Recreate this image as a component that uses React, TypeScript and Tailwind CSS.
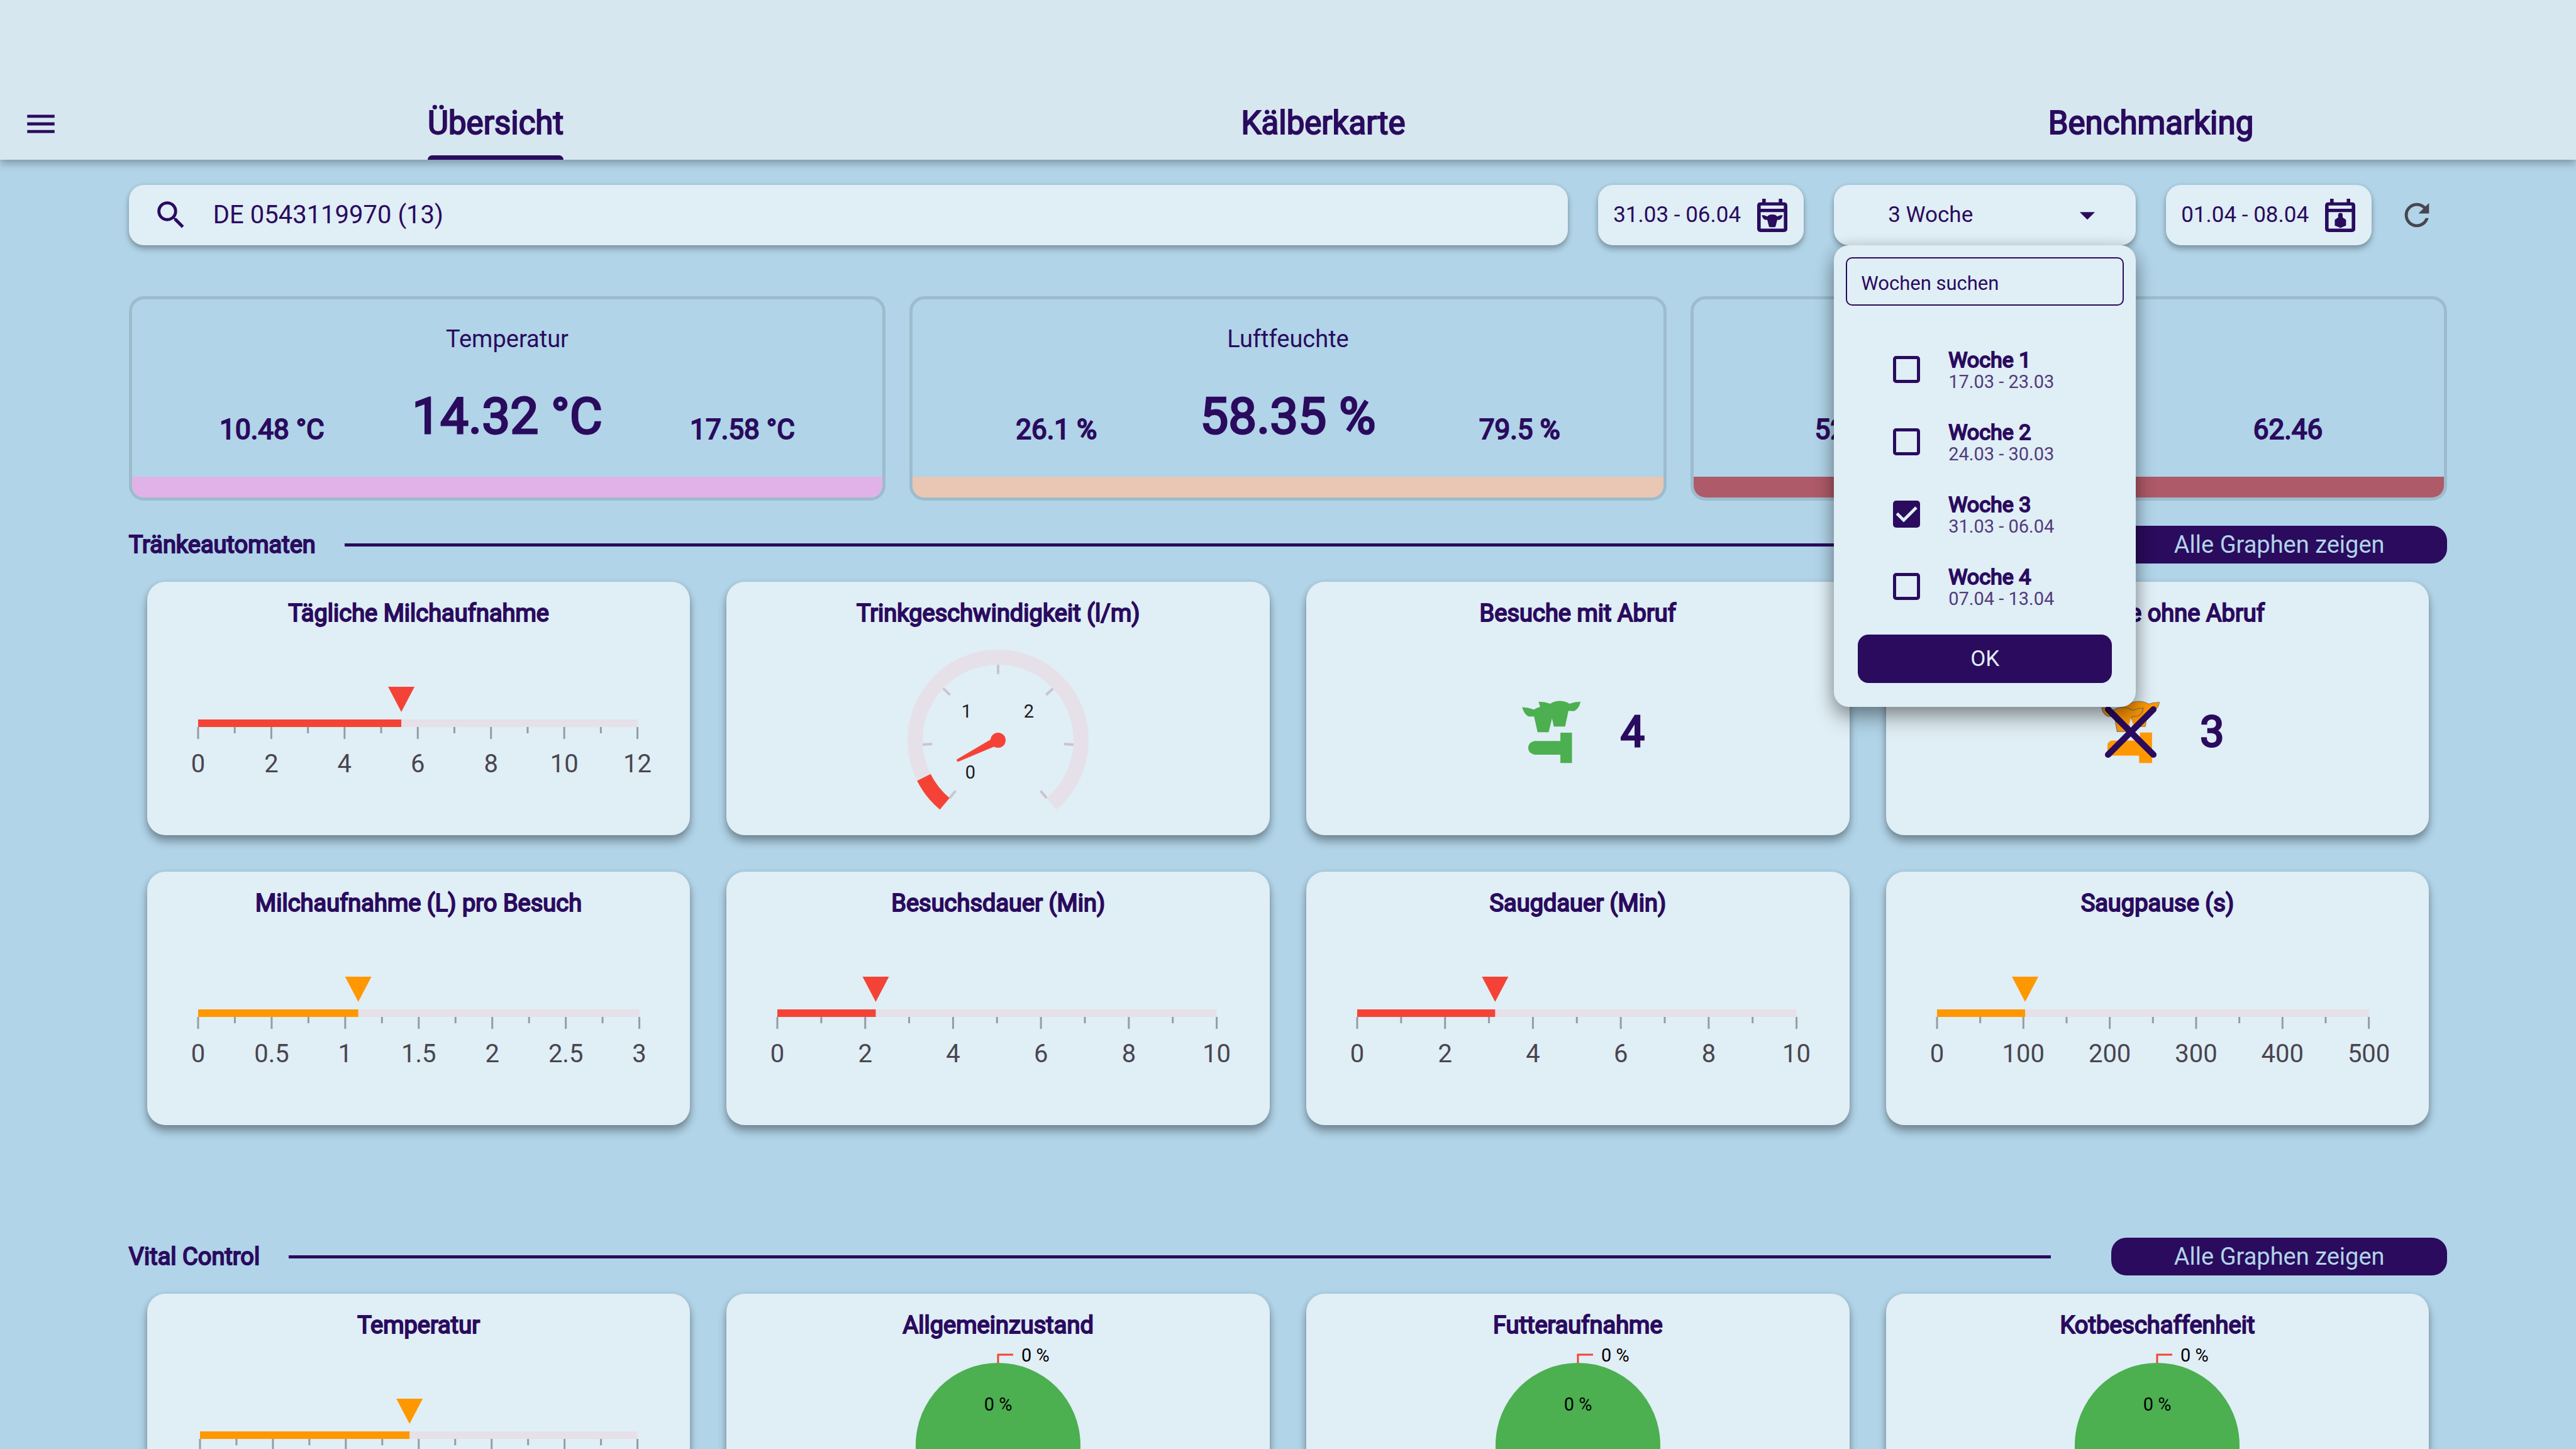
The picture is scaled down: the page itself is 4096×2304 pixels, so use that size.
import { useState } from "react";
import type { ReactNode } from "react";
import { MdArrowDropDown, MdMenu, MdRefresh, MdSearch } from "react-icons/md";

const RED = "#f44336";
const ORANGE = "#ff9800";
const GREEN = "#4caf50";
const INK = "#2a0b5e";

const COW_HEAD =
  "M0 4 Q18 4 32 13 Q40 0 62 0 Q84 0 92 13 Q106 4 124 4 Q120 30 100 33 L92 32 L81 74 Q62 79 43 74 L32 32 L24 33 Q4 30 0 4 Z";
const BOTTLE =
  "M34 0 Q47 0 47 13 L47 27 L67 41 L67 76 Q50 82 34 90 Q17 82 0 76 L0 41 L20 27 L20 13 Q20 0 34 0 Z";

function CalendarFrame({ children }: { children: ReactNode }) {
  return (
    <svg viewBox="0 0 180 198" className="h-[53px] w-[48px] shrink-0" fill="currentColor" aria-hidden="true">
      <path d="M30 0H51V30H30ZM129 0H150V30H129Z" />
      <path
        fillRule="evenodd"
        d="M20 21H160Q180 21 180 41V178Q180 198 160 198H20Q0 198 0 178V41Q0 21 20 21ZM21 40V60H159V40ZM21 79V178H159V79Z"
      />
      {children}
    </svg>
  );
}

function DateButton({ label, children }: { label: string; children: ReactNode }) {
  return (
    <button
      type="button"
      className="flex h-24 w-[327px] shrink-0 items-center justify-between rounded-[24px] bg-[#e0eef5] pr-[26px] pl-[24px] text-[35px] shadow-[0_6px_10px_rgba(0,0,0,0.28),0_0_6px_rgba(0,0,0,0.1)]"
    >
      <span className="whitespace-nowrap">{label}</span>
      <CalendarFrame>{children}</CalendarFrame>
    </button>
  );
}

const WEEKS = [
  { name: "Woche 1", range: "17.03 - 23.03" },
  { name: "Woche 2", range: "24.03 - 30.03" },
  { name: "Woche 3", range: "31.03 - 06.04" },
  { name: "Woche 4", range: "07.04 - 13.04" },
];

function WeekPicker() {
  const [picked, setPicked] = useState<string[]>(["Woche 3"]);
  const toggle = (name: string) =>
    setPicked((list) => (list.includes(name) ? list.filter((n) => n !== name) : [...list, name]));
  return (
    <div className="relative w-[480px] shrink-0">
      <button
        type="button"
        aria-expanded="true"
        aria-haspopup="dialog"
        className="flex h-24 w-full items-center justify-between rounded-[24px] bg-[#e0eef5] pr-[48px] pl-[86px] text-[35px] shadow-[0_6px_10px_rgba(0,0,0,0.28),0_0_6px_rgba(0,0,0,0.1)]"
      >
        3 Woche
        <MdArrowDropDown className="size-[58px]" />
      </button>
      <div
        role="dialog"
        aria-label="Wochen"
        className="absolute top-full left-0 z-20 flex w-full flex-col rounded-[24px] bg-[#e0eef5] pt-[19px] pb-[38px] shadow-[0_19px_32px_rgba(0,0,0,0.3),0_4px_24px_rgba(0,0,0,0.22)]"
      >
        <input
          type="text"
          aria-label="Wochen suchen"
          placeholder="Wochen suchen"
          className="mx-[19px] h-[77px] rounded-[10px] border-[2px] border-[#2a0b5e] bg-transparent px-[22px] pt-[5px] text-[31px] placeholder:text-[#2a0b5e] placeholder:opacity-100"
        />
        <ul className="mt-[44px]">
          {WEEKS.map((w) => (
            <li key={w.name}>
              <label className="flex h-[115px] items-center pl-[94px]">
                <span className="relative mr-[45px] size-[43px]">
                  <input
                    type="checkbox"
                    checked={picked.includes(w.name)}
                    onChange={() => toggle(w.name)}
                    className="peer block size-[43px] appearance-none rounded-[5px] border-[5px] border-[#2a0b5e] checked:bg-[#2a0b5e]"
                  />
                  <svg
                    viewBox="0 0 18 18"
                    className="pointer-events-none absolute inset-0 hidden size-full peer-checked:block"
                    fill="none"
                    stroke="#e0eef5"
                    strokeWidth="2"
                    aria-hidden="true"
                  >
                    <path d="M2.6 8.6 L7.1 13 L15.5 4.6" />
                  </svg>
                </span>
                <span className="flex flex-col">
                  <span className="text-[34px] leading-[38px] [-webkit-text-stroke:2px]">{w.name}</span>
                  <span className="text-[29px] leading-[32px] text-[#523b7d]">{w.range}</span>
                </span>
              </label>
            </li>
          ))}
        </ul>
        <button
          type="button"
          className="mx-[38px] mt-[19px] h-[77px] rounded-[17px] bg-[#2a0b5e] pt-[2px] text-[35px] text-[#e0eef5]"
        >
          OK
        </button>
      </div>
    </div>
  );
}

function StatCard({ title, values, bar }: { title: string; values: [string, string, string]; bar: string }) {
  return (
    <section className="flex flex-col overflow-hidden rounded-[24px] border-[5px] border-[#9dbccd]">
      <h2 className="mt-[40px] text-center text-[38px] leading-[46px]">{title}</h2>
      <div className="mt-[51px] flex items-end justify-evenly text-[44px] leading-[56px] [-webkit-text-stroke:2px]">
        <span>{values[0]}</span>
        <span className="text-[80px] leading-[98px] [-webkit-text-stroke:3px]">{values[1]}</span>
        <span>{values[2]}</span>
      </div>
      <div className={"mt-[47px] h-[33px] " + bar} />
    </section>
  );
}

function SectionHeader({ title }: { title: string }) {
  return (
    <div className="flex h-[60px] items-center">
      <h2 className="text-[38px] leading-[46px] [-webkit-text-stroke:2px]">{title}</h2>
      <div className="mr-24 ml-[46px] h-[5px] flex-1 bg-[#2a0b5e]" />
      <button type="button" className="h-[60px] w-[534px] rounded-[24px] bg-[#2a0b5e] text-[38px] leading-[46px] text-[#b1d4e8]">
        Alle Graphen zeigen
      </button>
    </div>
  );
}

function Card({ title, children }: { title: string; children: ReactNode }) {
  return (
    <article className="relative flex h-[403px] flex-col rounded-[29px] bg-[#e0eef5] pt-[27px] shadow-[0_10px_14px_rgba(0,0,0,0.32),0_1px_8px_rgba(0,0,0,0.12)]">
      <h3 className="text-center text-[38px] leading-[46px] [-webkit-text-stroke:2px]">{title}</h3>
      {children}
    </article>
  );
}

function LinearGauge({
  labels,
  percent,
  color,
  pad = "pr-[84px] pl-[81px]",
}: {
  labels: string[];
  percent: number;
  color: string;
  pad?: string;
}) {
  const steps = (labels.length - 1) * 2;
  return (
    <div className={"mt-[94px] " + pad}>
      <svg className="h-[150px] w-full overflow-visible" role="img" aria-label="Skala">
        <svg x={percent + "%"} y="0" overflow="visible">
          <path d="M-21 0H21L0 40Z" fill={color} />
        </svg>
        <rect x="0" y="52" width="100%" height="12" fill="#e6e0e9" />
        <rect x="0" y="52" width={percent + "%"} height="12" fill={color} />
        {Array.from({ length: steps + 1 }, (_, i) => (
          <line
            key={i}
            x1={(i / steps) * 100 + "%"}
            x2={(i / steps) * 100 + "%"}
            y1="64"
            y2={i % 2 === 0 ? 83 : 74}
            stroke="#959ca6"
            strokeWidth="3"
          />
        ))}
        {labels.map((l, i) =>
          l === "" ? null : (
            <text
              key={l}
              x={(i / (labels.length - 1)) * 100 + "%"}
              y="136"
              textAnchor="middle"
              fill="#49454f"
              fontSize="40"
            >
              {l}
            </text>
          ),
        )}
      </svg>
    </div>
  );
}

function polar(r: number, deg: number) {
  const a = (deg * Math.PI) / 180;
  return { x: r * Math.cos(a), y: r * Math.sin(a) };
}

function band(from: number, to: number) {
  const a = polar(144, from);
  const b = polar(144, to);
  const c = polar(120, to);
  const d = polar(120, from);
  const large = to - from > 180 ? 1 : 0;
  return `M${a.x} ${a.y}A144 144 0 ${large} 1 ${b.x} ${b.y}L${c.x} ${c.y}A120 120 0 ${large} 0 ${d.x} ${d.y}Z`;
}

function RadialGauge() {
  return (
    <svg viewBox="-150 -144 300 260" className="mx-auto mt-[35px] h-[260px] w-[300px]" role="img" aria-label="Trinkgeschwindigkeit">
      <path d={band(130, 410)} fill="#e6e0e9" />
      <path d={band(130, 153.4)} fill={RED} />
      {Array.from({ length: 7 }, (_, i) => {
        const deg = 130 + (i * 280) / 6;
        const p = polar(120, deg);
        const q = polar(105, deg);
        return <line key={i} x1={p.x} y1={p.y} x2={q.x} y2={q.y} stroke="#cac4d0" strokeWidth="4" />;
      })}
      <circle r="12" fill={RED} />
      <path d="M0 -7L73 -2V2L0 7Z" fill={RED} transform="rotate(153.4)" />
      <g fontSize="29" fill="#1c1b1f" textAnchor="middle">
        <text x="-44" y="61">0</text>
        <text x="-50" y="-36">1</text>
        <text x="49" y="-36">2</text>
      </g>
    </svg>
  );
}

const HEADS =
  "M50 77 Q85 77 120 91 Q137 80 157 75 L148 44 Q185 44 218 56 Q240 39 273 39 Q308 39 332 56 Q365 44 398 44 Q390 85 360 100 L326 98 L306 192 H239 L228 143 L208 226 H142 L121 132 L88 132 Q62 120 50 77 Z";

function VisitIcon() {
  return (
    <svg viewBox="0 0 450 450" className="size-[120px]" fill={GREEN} aria-hidden="true">
      <path d={HEADS} />
      <path d="M278 229H347V410H278V360H124Q86 352 86 319Q86 286 124 278H278Z" />
    </svg>
  );
}

function NoVisitIcon() {
  return (
    <svg viewBox="-10 0 450 450" className="size-[120px]" aria-hidden="true">
      <g fill={ORANGE}>
        <path
          d="M138 44 Q175 44 208 56 Q230 42 263 42 Q298 42 322 58 Q355 46 386 48 Q378 87 350 100 L316 98 L302 192 H229 Z"
          stroke="#8a7a5c"
          strokeWidth="4"
        />
        <path
          d="M42 80 Q75 80 110 94 Q137 78 165 78 Q200 78 226 95 Q258 82 290 82 Q285 118 258 130 L222 132 L202 222 H134 L118 132 L82 132 Q50 120 42 80 Z"
          stroke="#7c7768"
          strokeWidth="5"
        />
        <path d="M270 228H342V410H265V366H76V300Q80 280 104 276H270Z" />
      </g>
      <path d="M216 140L230 180L216 200L205 180Z" fill="#e0eef5" />
      <path d="M80 90L350 360M350 90L80 360" stroke={INK} strokeWidth="38" strokeLinecap="round" />
    </svg>
  );
}

function VisitCount({ count, children }: { count: number; children: ReactNode }) {
  return (
    <div className="mt-[106px] flex items-center justify-center gap-[50px] pl-1">
      {children}
      <span className="text-[68px] leading-[80px] [-webkit-text-stroke:3px]">{count}</span>
    </div>
  );
}

function Pie({ label }: { label: string }) {
  return (
    <svg viewBox="-150 -160 300 300" className="mx-auto mt-[8px] h-[300px] w-[300px]" role="img" aria-label={label}>
      <circle r="131" fill={GREEN} />
      <path d="M0 -131V-144H24" fill="none" stroke={RED} strokeWidth="3" />
      <g fontSize="29" fill="#000">
        <text x="37" y="-133">0 %</text>
        <text x="0" y="-55" textAnchor="middle">0 %</text>
      </g>
    </svg>
  );
}

export default function App() {
  const [query, setQuery] = useState("DE 0543119970 (13)");
  const tabs = ["Übersicht", "Kälberkarte", "Benchmarking"];
  return (
    <div className="h-screen overflow-hidden bg-[#b1d4e8] font-[Roboto,sans-serif] text-[#2a0b5e]">
      <header className="relative z-10 flex items-end bg-[#d7e7ef] pt-[139px] shadow-[0_6px_12px_rgba(0,0,0,0.28)]">
        <button type="button" aria-label="Menü" className="flex h-[115px] w-[130px] items-center justify-center">
          <MdMenu className="size-[58px]" />
        </button>
        <nav className="mr-[18px] grid flex-1 grid-cols-3">
          {tabs.map((t, i) => (
            <a
              key={t}
              href="#"
              aria-current={i === 0 ? "page" : undefined}
              className="flex h-[115px] flex-col items-center justify-end text-[51px] leading-[60px] [-webkit-text-stroke:2px]"
            >
              <span className="flex flex-col">
                <span className="mb-[21px]">{t}</span>
                <span className={i === 0 ? "h-[7px] rounded-t-[7px] bg-[#2a0b5e]" : "h-[7px]"} />
              </span>
            </a>
          ))}
        </nav>
      </header>

      <main className="px-[5%] pt-10">
        <div className="flex items-center">
          <label className="mr-12 flex h-24 flex-1 items-center rounded-[24px] bg-[#e0eef5] pl-[38px] shadow-[0_6px_10px_rgba(0,0,0,0.28),0_0_6px_rgba(0,0,0,0.1)]">
            <MdSearch className="size-[58px]" />
            <input
              type="text"
              aria-label="Kalb suchen"
              value={query}
              onChange={(e) => setQuery(e.target.value)}
              className="ml-[38px] flex-1 bg-transparent text-[40px] outline-none"
            />
          </label>
          <div className="flex gap-12">
            <DateButton label="31.03 - 06.04">
              <path d={COW_HEAD} transform="translate(28 93)" />
            </DateButton>
            <WeekPicker />
            <DateButton label="01.04 - 08.04">
              <path d={BOTTLE} transform="translate(58 84)" />
            </DateButton>
          </div>
          <button type="button" aria-label="Aktualisieren" className="ml-6 flex size-24 items-center justify-center text-[#49454f]">
            <MdRefresh className="size-[58px]" />
          </button>
        </div>

        <div className="mt-[81px] grid grid-cols-3 gap-[38px]">
          <StatCard title="Temperatur" values={["10.48 °C", "14.32 °C", "17.58 °C"]} bar="bg-[#e1b2e8]" />
          <StatCard title="Luftfeuchte" values={["26.1 %", "58.35 %", "79.5 %"]} bar="bg-[#e9c7b4]" />
          <StatCard title="THI" values={["52.37", "57.36", "62.46"]} bar="bg-[#ae5a68]" />
        </div>

        <div className="mt-10">
          <SectionHeader title="Tränkeautomaten" />
          <div className="mt-[29px] grid grid-cols-4 gap-[58px] px-[29px]">
            <Card title="Tägliche Milchaufnahme">
              <LinearGauge labels={["0", "2", "4", "6", "8", "10", "12"]} percent={46.25} color={RED} />
            </Card>
            <Card title="Trinkgeschwindigkeit (l/m)">
              <RadialGauge />
            </Card>
            <Card title="Besuche mit Abruf">
              <VisitCount count={4}>
                <VisitIcon />
              </VisitCount>
            </Card>
            <Card title="Besuche ohne Abruf">
              <VisitCount count={3}>
                <NoVisitIcon />
              </VisitCount>
            </Card>
            <Card title="Milchaufnahme (L) pro Besuch">
              <LinearGauge labels={["0", "0.5", "1", "1.5", "2", "2.5", "3"]} percent={36.3} color={ORANGE} pad="px-[81px]" />
            </Card>
            <Card title="Besuchsdauer (Min)">
              <LinearGauge labels={["0", "2", "4", "6", "8", "10"]} percent={22.4} color={RED} />
            </Card>
            <Card title="Saugdauer (Min)">
              <LinearGauge labels={["0", "2", "4", "6", "8", "10"]} percent={31.4} color={RED} />
            </Card>
            <Card title="Saugpause (s)">
              <LinearGauge
                labels={["0", "100", "200", "300", "400", "500"]}
                percent={20.4}
                color={ORANGE}
                pad="pr-[96px] pl-[81px]"
              />
            </Card>
          </div>
        </div>

        <div className="mt-[179px]">
          <SectionHeader title="Vital Control" />
          <div className="mt-[29px] grid grid-cols-4 gap-[58px] px-[29px]">
            <Card title="Temperatur">
              <LinearGauge labels={["", "", "", "", "", "", ""]} percent={47.9} color={ORANGE} pad="px-[84px]" />
            </Card>
            <Card title="Allgemeinzustand">
              <Pie label="Allgemeinzustand" />
            </Card>
            <Card title="Futteraufnahme">
              <Pie label="Futteraufnahme" />
            </Card>
            <Card title="Kotbeschaffenheit">
              <Pie label="Kotbeschaffenheit" />
            </Card>
          </div>
        </div>
      </main>
    </div>
  );
}
